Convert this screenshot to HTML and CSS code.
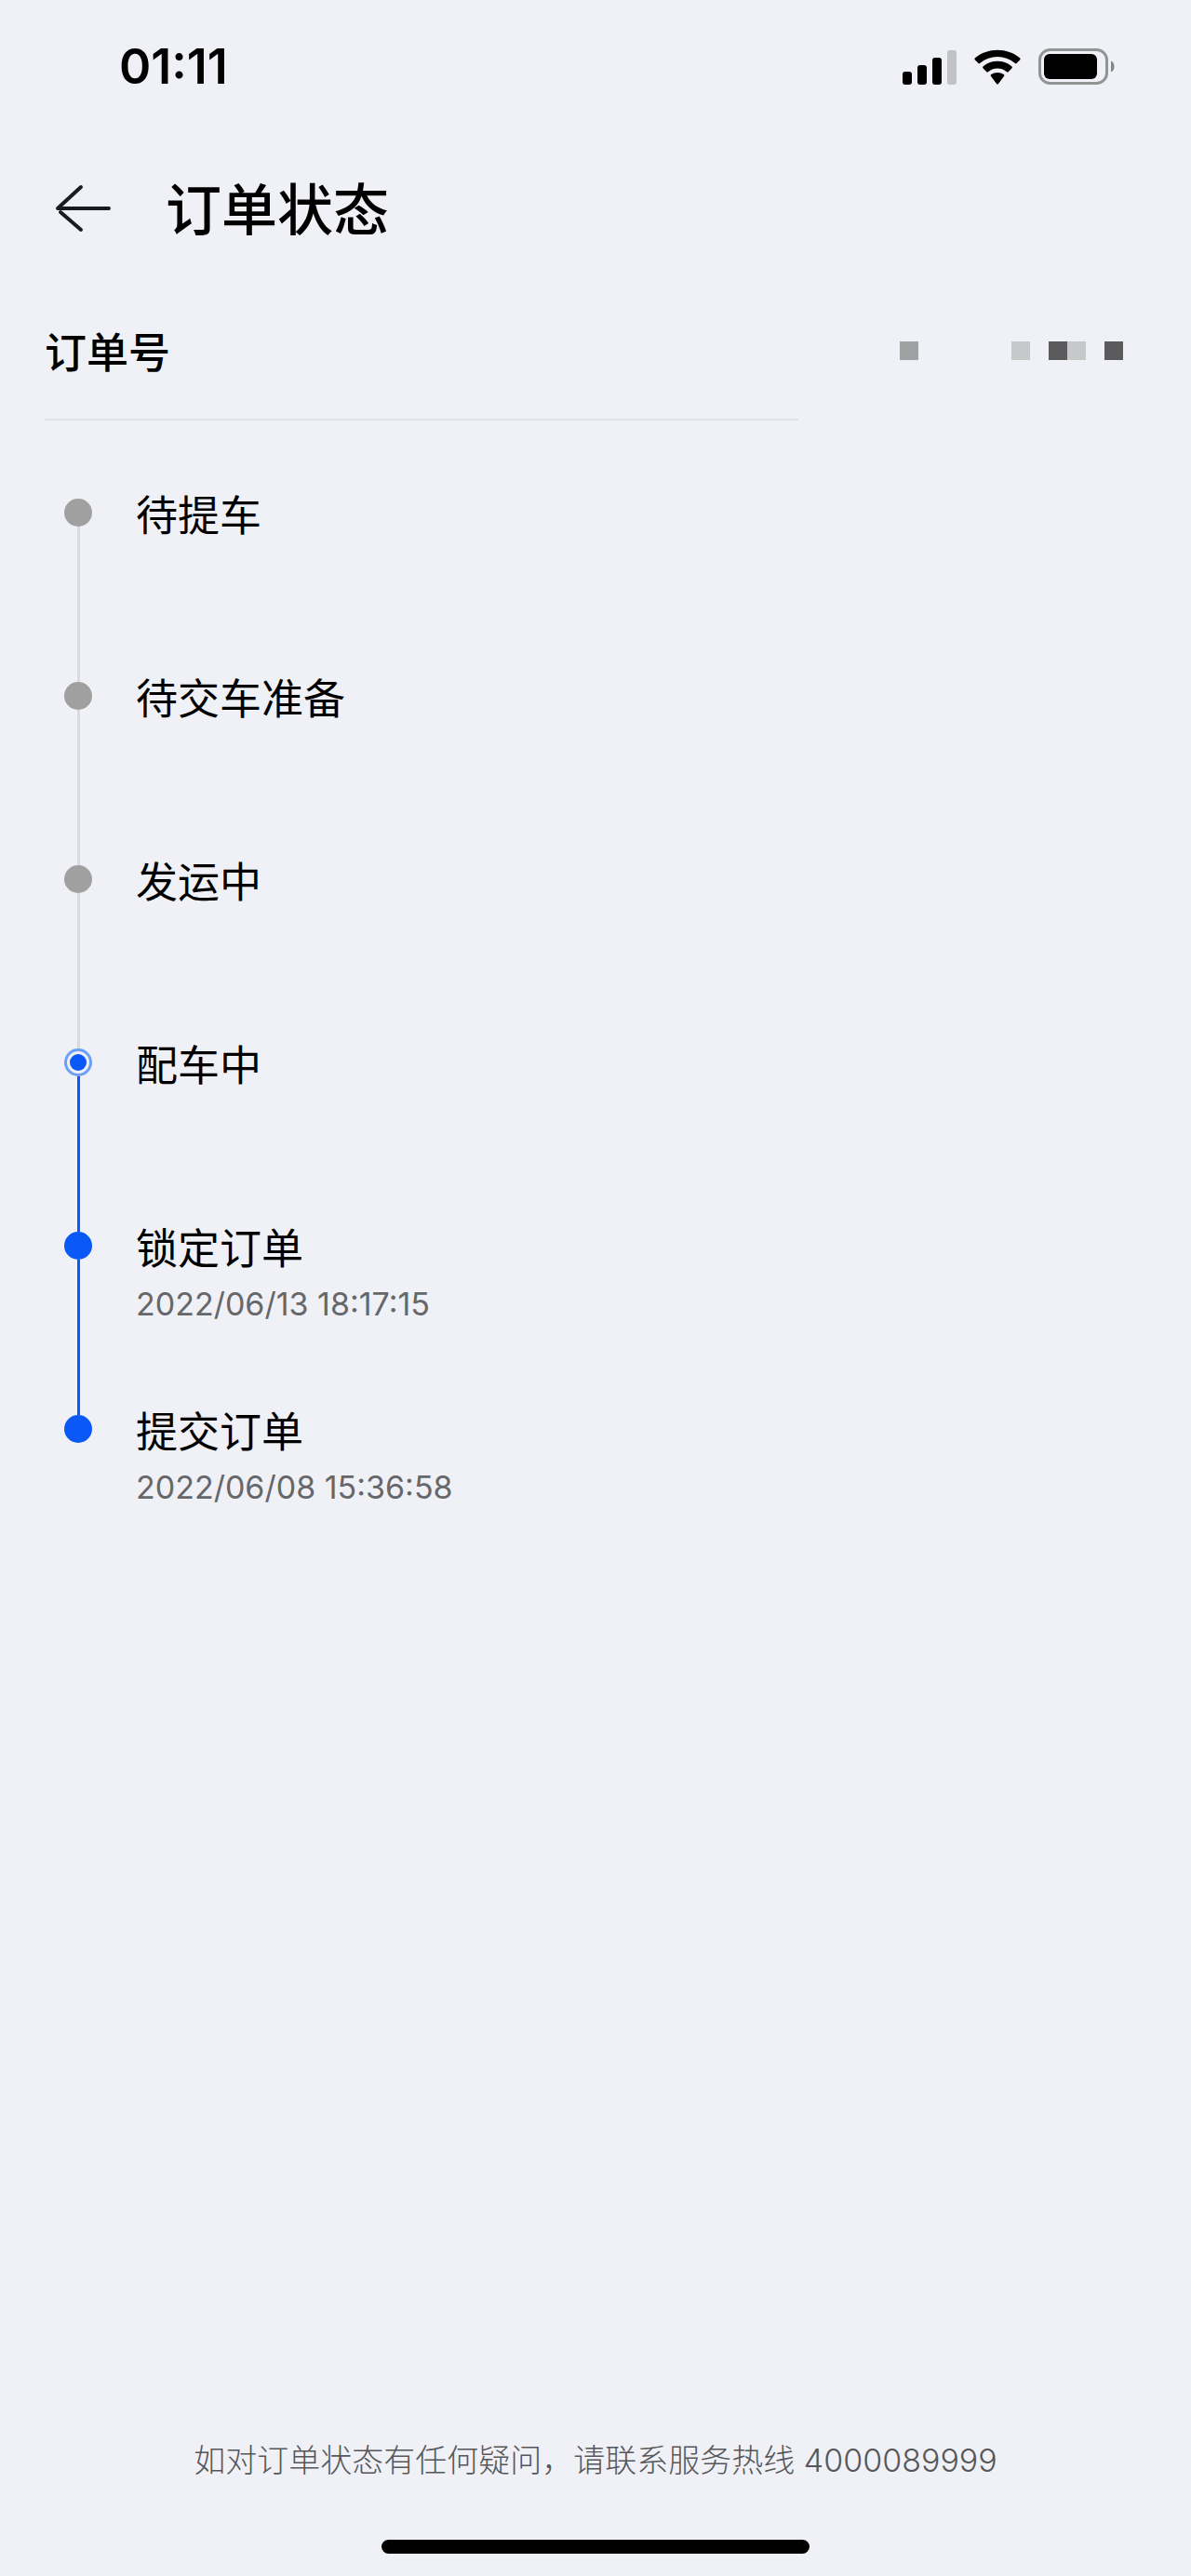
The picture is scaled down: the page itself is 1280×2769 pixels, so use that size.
FILE: index.html
```html
<!DOCTYPE html>
<html lang="zh-CN">
<head>
  <meta charset="UTF-8" />
  <meta name="viewport" content="width=device-width, initial-scale=1.0"/>
  <title>订单状态</title>
  <link rel="stylesheet" href="styles.css">
</head>
<body>
  <div class="status-bar">
    <time class="clock">01:11</time>
    <div class="status-icons">
      <svg width="58" height="38" viewBox="0 0 58 38" aria-hidden="true">
        <rect x="0" y="24" width="10" height="14" rx="3"/>
        <rect x="16" y="17" width="10" height="21" rx="3"/>
        <rect x="32" y="9" width="10" height="29" rx="3"/>
        <rect x="48" y="1" width="10" height="37" rx="3" fill="#c1c2c4"/>
      </svg>
      <svg width="50" height="38" viewBox="0 0 50 38" aria-hidden="true">
        <path d="M1 11.5Q-.2 10.4 1 9.3C14.500-2.100 35.500-2.100 49 9.300Q50.200 10.400 49 11.500L45.800 14.700Q44.800 15.700 43.600 14.700C33 5.900 17 5.900 6.400 14.700Q5.200 15.700 4.200 14.700Z"/>
        <path d="M9.600 20.400Q8.500 19.300 9.700 18.200C18.500 10.900 31.500 10.900 40.300 18.200Q41.500 19.300 40.400 20.400L36.900 23.900Q35.900 24.900 34.700 23.900C29 19.400 21 19.400 15.300 23.900Q14.100 24.900 13.100 23.900Z"/>
        <path d="M18 29Q17 28 18.200 27.100C22 24.300 28 24.300 31.800 27.100Q33 28 32 29L26 37Q25 38 24 37Z"/>
      </svg>
      <svg width="82" height="40" viewBox="0 0 82 40" aria-hidden="true">
        <rect x="1.500" y="1.500" width="72" height="36" rx="11" fill="none" stroke="#929395" stroke-width="3"/>
        <rect x="6" y="6" width="57" height="27" rx="6"/>
        <path d="M78 13.500C82.700 15 82.700 24 78 25.500Z" fill="#838486"/>
      </svg>
    </div>
  </div>

  <header class="header">
    <button type="button" class="back" aria-label="返回">
      <svg width="60" height="52" viewBox="0 0 60 52" aria-hidden="true">
        <path d="M57 26H2L27 3M5 30L27 49" fill="none" stroke="#1b1c1f" stroke-width="4" stroke-linecap="round" stroke-linejoin="round"/>
      </svg>
    </button>
    <h1>订单状态</h1>
  </header>

  <main>
    <section class="order">
      <h2>订单号</h2>
      <div class="order-mask">
        <span class="mid"></span>
        <span class="light at-7"></span>
        <span class="dark at-9"></span>
        <span class="light at-10"></span>
        <span class="dark at-12"></span>
      </div>
    </section>
    <hr>

    <ol class="steps">
      <li>
        <div class="rail"><i class="dot"></i></div>
        <div class="step"><h3>待提车</h3></div>
      </li>
      <li>
        <div class="rail"><i class="dot"></i></div>
        <div class="step"><h3>待交车准备</h3></div>
      </li>
      <li>
        <div class="rail"><i class="dot"></i></div>
        <div class="step"><h3>发运中</h3></div>
      </li>
      <li class="done current">
        <div class="rail"><i class="dot"></i></div>
        <div class="step"><h3>配车中</h3></div>
      </li>
      <li class="done">
        <div class="rail"><i class="dot"></i></div>
        <div class="step">
          <h3>锁定订单</h3>
          <time>2022/06/13 18:17:15</time>
        </div>
      </li>
      <li class="done">
        <div class="rail"><i class="dot"></i></div>
        <div class="step">
          <h3>提交订单</h3>
          <time>2022/06/08 15:36:58</time>
        </div>
      </li>
    </ol>
  </main>

  <footer>
    <p>如对订单状态有任何疑问，请联系服务热线 <a href="tel:4000089999">4000089999</a></p>
    <div class="home-bar"></div>
  </footer>
</body>
</html>
```
FILE: styles.css
```css
* {
  box-sizing: border-box;
  margin: 0;
  padding: 0;
}
body {
  display: flex;
  flex-direction: column;
  min-height: 100vh;
  background-color: #f0f1f6;
  color: #000;
  font-family: Inter, "Noto Sans CJK SC", sans-serif;
}
svg {
  display: block;
}

/* status bar */
.status-bar {
  display: flex;
  justify-content: space-between;
  align-items: center;
  height: 144px;
  padding: 0 82px 0 128px;
}
.clock {
  font-size: 52px;
  line-height: 60px;
  font-weight: 600;
}
.status-icons {
  display: flex;
  align-items: center;
  gap: 19px;
}

/* title */
.header {
  display: flex;
  align-items: center;
  gap: 58px;
  height: 160px;
  padding: 0 60px;
}
.back {
  border: none;
  background: none;
  cursor: pointer;
}
h1 {
  padding-top: 3px;
  font-size: 60px;
  line-height: 80px;
  font-weight: 500;
}

/* order number */
main {
  flex: 1;
}
.order {
  display: flex;
  justify-content: space-between;
  align-items: center;
  height: 146px;
  padding: 0 73px 0 48px;
}
h2 {
  padding-top: 6px;
  font-size: 45px;
  line-height: 60px;
  font-weight: 500;
}
.order-mask {
  display: grid;
  grid-template-columns: repeat(12, 20px);
  grid-auto-rows: 20px;
}
.order-mask span {
  grid-row: 1;
}
.mid {
  background-color: #a0a1a3;
}
.light {
  background-color: #c7c8ca;
}
.dark {
  background-color: #5b5b5d;
}
.at-7 {
  grid-column: 7;
}
.at-9 {
  grid-column: 9;
}
.at-10 {
  grid-column: 10;
}
.at-12 {
  grid-column: 12;
}
hr {
  margin: 0 33% 0 48px;
  height: 2px;
  border: none;
  background-color: #e0e1e5;
}

/* timeline */
.steps {
  list-style: none;
  padding: 84px 69px 0;
}
.steps li {
  display: flex;
  gap: 47px;
  min-height: 197px;
}
.rail {
  display: flex;
  flex-direction: column;
  align-items: center;
  width: 30px;
}
.dot {
  width: 30px;
  height: 30px;
  border-radius: 50%;
  background-color: #a0a0a0;
}
.rail::after {
  content: "";
  flex: 1;
  width: 3px;
  background-color: #d9dade;
}
.done .dot {
  background-color: #0a59f7;
}
.done .rail::after {
  background-color: #0a59f7;
}
.current .dot {
  border: 3px solid #6ca0f8;
  padding: 3px;
  background-color: #0a59f7;
  background-clip: content-box;
}
.steps li:last-child .rail::after {
  display: none;
}
h3 {
  margin-top: -11px;
  font-size: 45px;
  line-height: 60px;
  font-weight: 400;
}
.step time {
  display: block;
  color: #66676a;
  font-size: 34px;
  line-height: 58px;
  font-weight: 400;
}

/* hotline */
footer {
  display: flex;
  flex-direction: column;
  align-items: center;
  gap: 60px;
  padding-bottom: 24px;
}
footer p {
  color: #56575a;
  font-size: 34px;
  line-height: 50px;
  font-weight: 300;
}
footer a {
  color: inherit;
  text-decoration: none;
}
.home-bar {
  width: 36%;
  height: 15px;
  border-radius: 8px;
  background-color: #000;
}
```
